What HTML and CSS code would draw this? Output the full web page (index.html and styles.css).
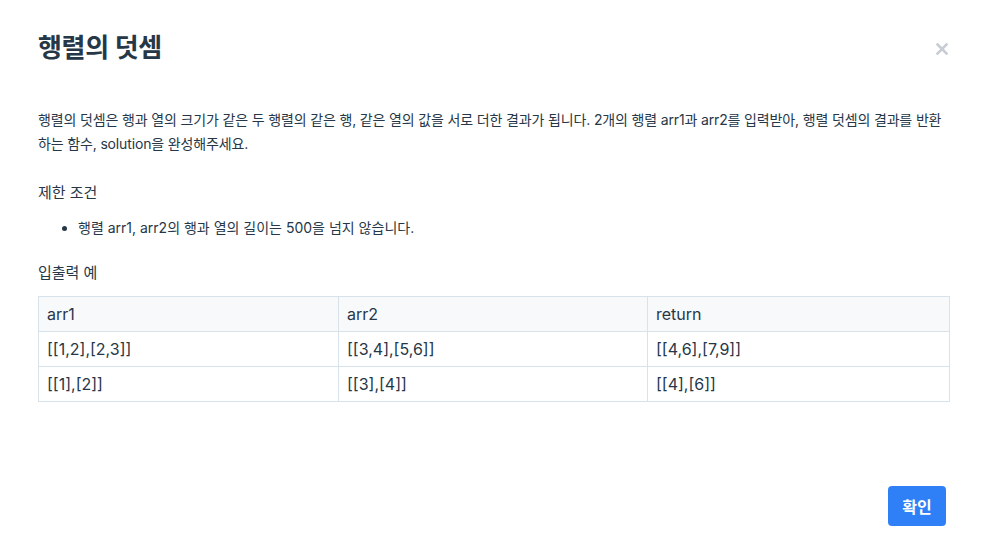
FILE: index.html
```html
<!DOCTYPE html>
<html lang="ko">
<head>
<meta charset="utf-8">
<link rel="stylesheet" href="styles.css">
</head>
<body>
<div class="modal">
  <header class="modal-header">
    <h1 class="title">행렬의 덧셈</h1>
    <button class="close" aria-label="닫기">
      <svg width="12" height="12" viewBox="0 0 12 12"><path d="M1.5 1.5 L10.5 10.5 M10.5 1.5 L1.5 10.5" stroke="#c8cdd3" stroke-width="2.6" stroke-linecap="square"/></svg>
    </button>
  </header>
  <div class="modal-body">
    <p class="desc">행렬의 덧셈은 행과 열의 크기가 같은 두 행렬의 같은 행, 같은 열의 값을 서로 더한 결과가 됩니다. 2개의 행렬 arr1과 arr2를 입력받아, 행렬 덧셈의 결과를 반환하는 함수, solution을 완성해주세요.</p>
    <h5 class="sub">제한 조건</h5>
    <ul class="list">
      <li>행렬 arr1, arr2의 행과 열의 길이는 500을 넘지 않습니다.</li>
    </ul>
    <h5 class="sub">입출력 예</h5>
    <table class="io">
      <thead>
        <tr><th class="c1">arr1</th><th class="c2">arr2</th><th>return</th></tr>
      </thead>
      <tbody>
        <tr><td>[[1,2],[2,3]]</td><td>[[3,4],[5,6]]</td><td>[[4,6],[7,9]]</td></tr>
        <tr><td>[[1],[2]]</td><td>[[3],[4]]</td><td>[[4],[6]]</td></tr>
      </tbody>
    </table>
  </div>
  <footer class="modal-footer">
    <button class="confirm">확인</button>
  </footer>
</div>
</body>
</html>
```

FILE: styles.css
```css
* { box-sizing: border-box; }
html, body { margin: 0; padding: 0; background: #fff; }
body {
  font-family: Inter, "Noto Sans CJK KR", sans-serif;
  color: #263747;
}
.modal {
  width: 983px;
  height: 557px;
  display: flex;
  flex-direction: column;
  padding: 0 33px 0 38px;
}
.modal-header {
  display: flex;
  align-items: center;
  justify-content: space-between;
  height: 94px;
  padding-top: 2px;
}
.title {
  margin: 0;
  font-size: 26px;
  font-weight: 700;
  letter-spacing: -0.3px;
  line-height: 1;
}
.close {
  border: 0;
  background: none;
  padding: 0;
  width: 16px;
  height: 16px;
  display: flex;
  align-items: center;
  justify-content: center;
  margin-top: 2px;
  cursor: pointer;
}
.modal-body {
  width: 912px;
  padding-top: 14px;
}
.desc {
  margin: 0;
  font-size: 14px;
  line-height: 24px;
  letter-spacing: -0.15px;
}
.sub {
  margin: 25px 0 0;
  font-size: 15px;
  font-weight: 400;
  line-height: 24px;
}
.list {
  margin: 11px 0 0;
  padding-left: 40px;
  font-size: 14px;
  line-height: 24px;
}
.list + .sub { margin-top: 21px; }
.io {
  margin-top: 11px;
  width: 912px;
  border-collapse: collapse;
  font-size: 16px;
}
.io th, .io td {
  border: 1px solid #d7e2eb;
  height: 35px;
  padding: 0 8px;
  text-align: left;
  font-weight: 400;
  vertical-align: middle;
}
.io thead th { background: #f8f9fb; }
.io .c1 { width: 300px; }
.io .c2 { width: 309px; }
.modal-footer {
  margin-top: auto;
  display: flex;
  justify-content: flex-end;
  padding: 0 4px 31px 0;
}
.confirm {
  width: 58px;
  height: 40px;
  border: 0;
  border-radius: 4px;
  background: #2f80f6;
  color: #fff;
  font-family: Inter, "Noto Sans CJK KR", sans-serif;
  font-size: 16px;
  font-weight: 700;
  cursor: pointer;
}
```
